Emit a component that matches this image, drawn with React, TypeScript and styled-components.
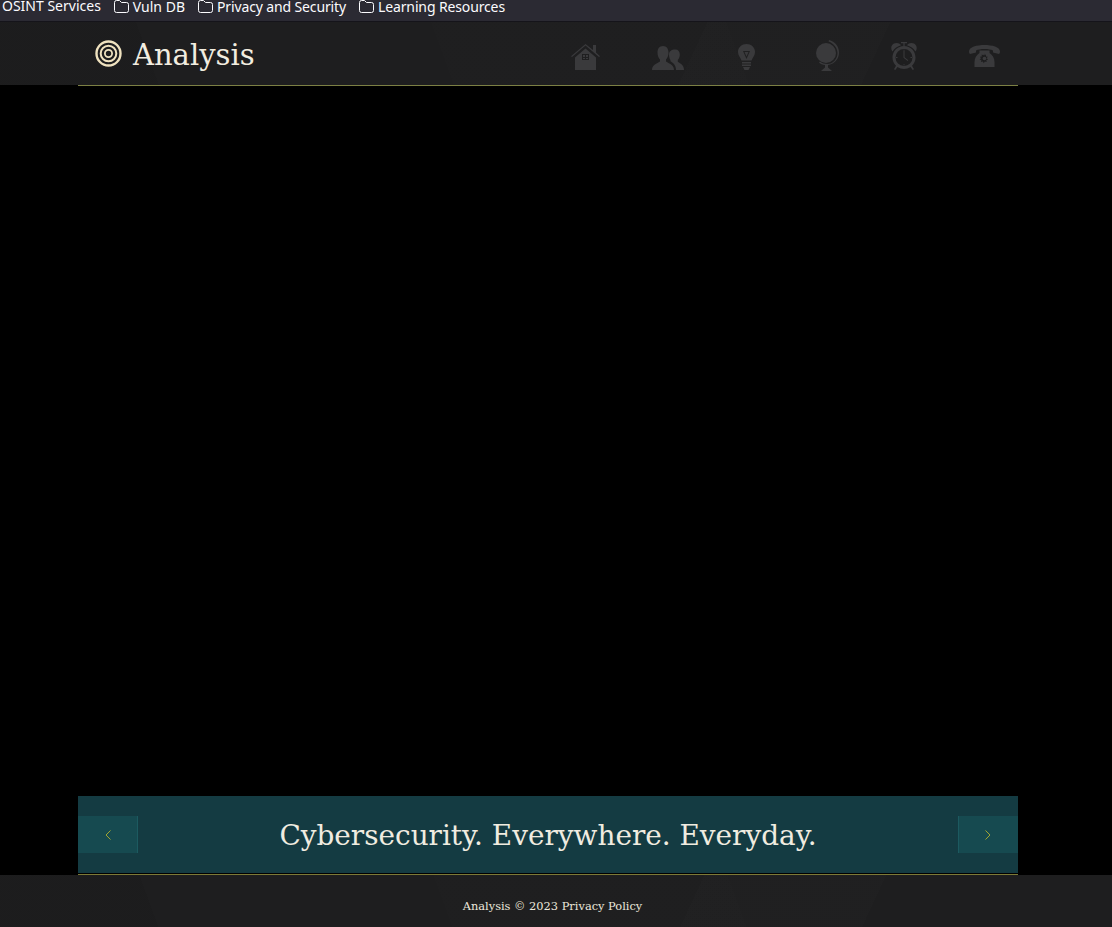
import React from "react";
import styled, { createGlobalStyle } from "styled-components";

const SLAB = '"DejaVu Serif", "Liberation Serif", serif';

const GlobalStyle = createGlobalStyle`
  html, body { margin: 0; padding: 0; height: 100%; background: #000; overflow: hidden; }
  #root { height: 100%; }
`;

const Page = styled.div`
  height: 927px;
  display: flex;
  flex-direction: column;
`;

const BookmarkBar = styled.div`
  height: 21px;
  flex: none;
  display: flex;
  align-items: flex-start;
  gap: 13px;
  padding-left: 2px;
  overflow: hidden;
  background: #2b2a33;
  border-bottom: 1px solid #15141a;
  font-family: "Noto Sans", sans-serif;
  font-size: 14px;
  line-height: 12px;
  color: #fbfbfe;
`;

const Bookmark = styled.div<{ $tight?: boolean }>`
  display: flex;
  align-items: center;
  gap: 4px;
  white-space: nowrap;
  letter-spacing: ${(p) => (p.$tight ? "-0.13px" : "0")};
`;

const Textured = styled.div`
  background-color: #1e1e1f;
  background-image:
    linear-gradient(115deg, transparent 0 62%, rgba(255, 255, 255, 0.006) 62% 78%, transparent 78%),
    linear-gradient(70deg, rgba(0, 0, 0, 0.05) 0 14%, transparent 14% 40%, rgba(255, 255, 255, 0.004) 40% 66%, transparent 66%);
`;

const Header = styled(Textured)`
  height: 63px;
  flex: none;
  display: flex;
  justify-content: center;
  padding-right: 16px;
`;

const Inner = styled.div`
  width: 940px;
  display: flex;
  align-items: center;
  justify-content: space-between;
`;

const Brand = styled.div`
  display: flex;
  align-items: center;
  gap: 11px;
  padding-left: 17px;
`;

const Title = styled.h1`
  margin: 0;
  padding-top: 3px;
  font-family: ${SLAB};
  font-weight: 400;
  font-size: 29px;
  line-height: 36px;
  color: #f2ede0;
`;

const Nav = styled.nav`
  display: flex;
  align-items: flex-start;
  height: 63px;
  padding-right: 18px;
`;

const NavIcon = styled.svg<{ $left: number; $top: number }>`
  display: block;
  flex: none;
  margin-left: ${(p) => p.$left}px;
  margin-top: ${(p) => p.$top}px;
  fill: #3a3a3c;
`;

const Main = styled.main`
  flex: 1;
  display: flex;
  flex-direction: column;
  align-items: center;
  padding-right: 16px;
  background: #000;
`;

const Rule = styled.div`
  width: 940px;
  height: 1px;
  flex: none;
  background: #7c8044;
`;

const Banner = styled.section`
  width: 940px;
  height: 77px;
  margin-top: auto;
  flex: none;
  display: flex;
  align-items: center;
  justify-content: space-between;
  background: #143b42;
`;

const Slogan = styled.h2`
  margin: 0;
  padding-top: 2px;
  font-family: ${SLAB};
  font-weight: 400;
  font-size: 27.9px;
  color: #f0ece0;
  white-space: nowrap;
`;

const Arrow = styled.button<{ $side: "left" | "right" }>`
  width: 60px;
  height: 37px;
  padding: 0;
  display: flex;
  align-items: center;
  justify-content: center;
  background: #164a50;
  border: 0;
  border-${(p) => (p.$side === "left" ? "right" : "left")}: 1px solid #1c5a60;
`;

const FooterRule = styled(Rule)`
  margin-top: 1px;
  background: #7d7a36;
`;

const Footer = styled(Textured)`
  height: 52px;
  flex: none;
  display: flex;
  align-items: center;
  justify-content: center;
  padding: 9px 7px 0 0;
  box-sizing: border-box;
  font-family: ${SLAB};
  font-size: 11.4px;
  color: #ece8dc;
`;

const Folder = () => (
  <svg width="15" height="13" viewBox="0 0 15 13" fill="none" stroke="#fbfbfe" strokeWidth="1">
    <path d="M.5 2.500a2 2 0 0 1 2-2h3l2 2h5a2 2 0 0 1 2 2v6a2 2 0 0 1-2 2h-10a2 2 0 0 1-2-2z" />
  </svg>
);

const Target = () => (
  <svg width="27" height="27" viewBox="0 0 27 27" fill="none" stroke="#efe2bf">
    <circle cx="13.5" cy="13.5" r="12" strokeWidth="2.4" />
    <circle cx="13.5" cy="13.5" r="7.8" strokeWidth="2" />
    <circle cx="13.5" cy="13.5" r="3.6" strokeWidth="1.8" />
  </svg>
);

const Chevron = ({ dir }: { dir: "left" | "right" }) => (
  <svg width="6" height="10" viewBox="0 0 6 10" fill="none" stroke="#b0b02e" strokeWidth="0.9">
    <path d={dir === "left" ? "M5.5.5 1 5l4.5 4.5" : "M.5.5 5 5 .5 9.5"} />
  </svg>
);

const BOOKMARKS = ["Vuln DB", "Privacy and Security", "Learning Resources"];

export default function App() {
  return (
    <Page>
      <GlobalStyle />
      <BookmarkBar>
        <Bookmark>OSINT Services</Bookmark>
        {BOOKMARKS.map((name) => (
          <Bookmark key={name} $tight={name !== "Vuln DB"}>
            <Folder />
            {name}
          </Bookmark>
        ))}
      </BookmarkBar>
      <Header>
        <Inner>
          <Brand>
            <Target />
            <Title>Analysis</Title>
          </Brand>
          <Nav>
            {/* home */}
            <NavIcon $left={0} $top={22} width="29" height="26" viewBox="0 0 29 26">
              <path fillRule="evenodd" d="M14.5 0 22 6V1h3v7.600l4 3.600-1 .8-13.500-11.500L1 13l-1-.8zM4 13.500 14.500 4.500 25 13.500V26H4zM11 10v6h7v-6zm1 1h2v2h-2zm3 0h2v2h-2zm-3 3h2v1h-2zm3 0h2v1h-2z" />
            </NavIcon>
            {/* people */}
            <NavIcon $left={52} $top={24} width="32" height="24" viewBox="0 0 32 24">
              <path d="M11 0c3.500 0 5.500 2.800 5.500 6.500 0 3-1 5.500-2.500 7v2c2 1.500 8 3 8 8.500H0c0-5.500 6-7 8-8.500v-2C6.500 12 5.500 9.500 5.500 6.500 5.500 2.800 7.500 0 11 0z" />
              <path d="M23.500 3.500c2.700 0 4.300 2 4.300 5 0 2.300-.8 4.200-2 5.500v1.800c1.500 1.200 6.200 2.700 6.200 8.200h-8c0-4.500-2.500-7-5.500-8.700V14c-1-1.300-1.500-3.200-1.500-5.500 0-3 2-5 6.500-5z" />
            </NavIcon>
            {/* bulb */}
            <NavIcon $left={54} $top={22} width="17" height="26" viewBox="0 0 17 26">
              <path fillRule="evenodd" d="M8.500 0C13.200 0 17 3.500 17 8c0 3.500-2.500 5.500-3.500 8.500h-10C2.500 13.500 0 11.500 0 8 0 3.500 3.800 0 8.500 0zM5 7l3.500 8L12 7zm1.500 1h4L8.500 12.500z" />
              <path d="M4 18h9v1.600H4zm0 2.500h9v1.600H4zm1 2.500h7l-1.500 3h-4z" />
            </NavIcon>
            {/* globe */}
            <NavIcon $left={61} $top={18} width="23" height="31" viewBox="0 0 23 31">
              <circle cx="10" cy="13" r="10" />
              <path d="M13 0c6 1.500 10 6.500 10 12.500 0 6.500-5 12-11 12.500v2.500l4 3.500H5l4-3.500V25c-2.500-.2-4.500-1-6-2.500l1-1c2 1.800 5 2.500 7.500 2.500 5.500 0 10-5 10-11 0-5-3.500-9.500-9-11.500z" />
            </NavIcon>
            {/* alarm clock */}
            <NavIcon $left={52} $top={20} width="26" height="28" viewBox="0 0 26 28">
              <path fillRule="evenodd" d="M13 4c6.400 0 11.500 5.100 11.500 11.500 0 3.300-1.300 6.200-3.500 8.300l2 3.400-1.300.8-2.200-3.100c-1.900 1.300-4.100 2-6.500 2s-4.600-.7-6.500-2L4.300 28 3 27.200l2-3.400c-2.200-2.100-3.500-5-3.500-8.300C1.500 9.100 6.600 4 13 4zm0 3a8.500 8.500 0 1 0 0 17 8.500 8.500 0 0 0 0-17z" />
              <path d="M5.500 1C8 1 9.500 2 10 3.300 6.500 4.200 3.500 6.500 1.500 9.500-.5 7-.5 1.500 5.500 1zM20.500 1c-2.500 0-4 1-4.500 2.300 3.500.9 6.500 3.200 8.500 6.200 2-2.500 2-8-4-8.500z" />
              <path d="M10 0h6v1.200h-2.400V4h-1.200V1.200H10zM12.500 9h1v6.300l3.800 3-.6.8-4.200-3.300zM12.600 7.500h.8v1.500h-.8zM12.600 22h.8v1.500h-.8zM5 15.100h1.500v.8H5zM19.500 15.100H21v.8h-1.500z" />
            </NavIcon>
            {/* phone */}
            <NavIcon $left={52} $top={23} width="31" height="22" viewBox="0 0 31 22">
              <path d="M15.500 0C23 0 31 2 31 6.500c0 1-.3 2-1 2.500l-6-1.500V5.500C22 4.500 19 4 15.500 4S9 4.500 7 5.500v2L1 9c-.7-.5-1-1.500-1-2.500C0 2 8 0 15.500 0z" />
              <path fillRule="evenodd" d="M10.500 5.500h10V8c3 2 5 5 5 9v5h-20v-5c0-4 2-7 5-9zM15.500 8.500l-1 1.700-1.800-.7.100 1.900-1.900.3 1.100 1.600-1.400 1.300 1.800.6-.4 1.900 1.900-.5.900 1.700 1-1.700 1.900.5-.4-1.900 1.800-.6-1.400-1.300 1.100-1.600-1.900-.3.100-1.900-1.800.7z" />
              <circle cx="15.500" cy="13.500" r="1.800" />
            </NavIcon>
          </Nav>
        </Inner>
      </Header>
      <Main>
        <Rule />
        <Banner>
          <Arrow $side="left" aria-label="Previous">
            <Chevron dir="left" />
          </Arrow>
          <Slogan>Cybersecurity. Everywhere. Everyday.</Slogan>
          <Arrow $side="right" aria-label="Next">
            <Chevron dir="right" />
          </Arrow>
        </Banner>
        <FooterRule />
      </Main>
      <Footer>Analysis © 2023 Privacy Policy</Footer>
    </Page>
  );
}
